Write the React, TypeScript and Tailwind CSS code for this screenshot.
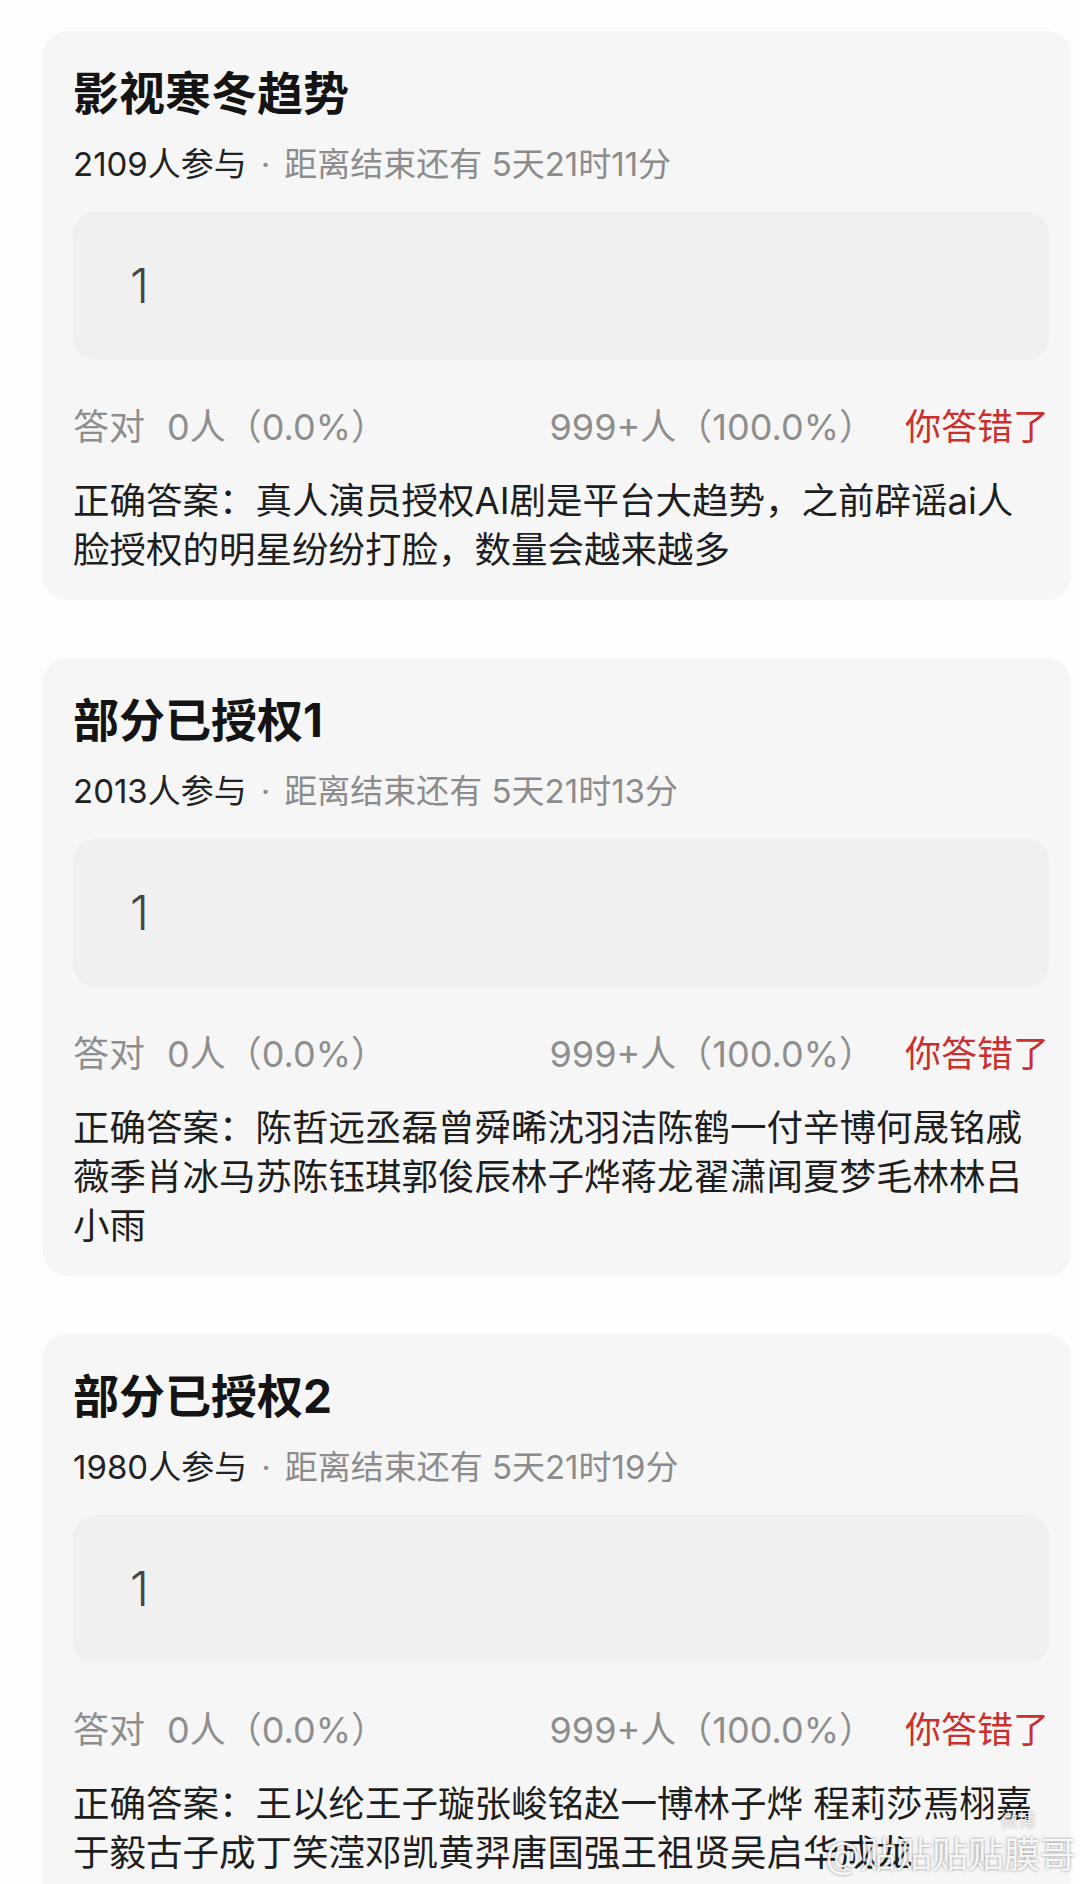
import React from "react";

type Quiz = {
  title: string;
  joined: number;
  remain: string;
  answer: string[];
};

const quizzes: Quiz[] = [
  {
    title: "影视寒冬趋势",
    joined: 2109,
    remain: "5天21时11分",
    answer: ["正确答案：真人演员授权AI剧是平台大趋势，之前辟谣ai人", "脸授权的明星纷纷打脸，数量会越来越多"],
  },
  {
    title: "部分已授权1",
    joined: 2013,
    remain: "5天21时13分",
    answer: [
      "正确答案：陈哲远丞磊曾舜晞沈羽洁陈鹤一付辛博何晟铭戚",
      "薇季肖冰马苏陈钰琪郭俊辰林子烨蒋龙翟潇闻夏梦毛林林吕",
      "小雨",
    ],
  },
  {
    title: "部分已授权2",
    joined: 1980,
    remain: "5天21时19分",
    answer: ["正确答案：王以纶王子璇张峻铭赵一博林子烨 程莉莎焉栩嘉", "于毅古子成丁笑滢邓凯黄羿唐国强王祖贤吴启华成龙"],
  },
];

const font = { fontFamily: 'Inter, "Noto Sans CJK SC", sans-serif' };

function QuizCard({ quiz }: { quiz: Quiz }) {
  return (
    <div className="rounded-[24px] bg-[#f6f6f6] pl-[30px] pr-[22px] pt-[34px] pb-[25px]">
      <h2 className="text-[46px] leading-[56px] font-bold text-[#141414]">{quiz.title}</h2>

      <p className="mt-[21px] text-[33px] leading-[44px] text-[#8c8c8c]">
        <span className="text-[#222]">{quiz.joined}人参与</span>
        <span className="mx-[14px]">·</span>
        距离结束还有 {quiz.remain}
      </p>

      {/* answer input */}
      <div className="mt-[26px] h-[148px] rounded-[22px] bg-[#f0f0f0] flex items-center pl-[57px]">
        <span className="text-[48px] font-light text-[#444]">1</span>
      </div>

      <div className="mt-[45px] flex items-center text-[36px] leading-[44px] text-[#8e8e8e]">
        <span className="flex-1">
          答对<span className="ml-[22px]">0人（0.0%）</span>
        </span>
        <span>999+人（100.0%）</span>
        <span className="ml-[30px] text-[#c9302e]">你答错了</span>
      </div>

      <div className="mt-[28px] text-[36.5px] leading-[49px] text-[#1e1e1e]">
        {quiz.answer.map((line) => (
          <p key={line} className="whitespace-nowrap">
            {line}
          </p>
        ))}
      </div>
    </div>
  );
}

export default function App() {
  return (
    <div className="relative h-[1884px] overflow-hidden bg-[#fdfdfd] pl-[43px] pr-[9px] pt-[31px]" style={font}>
      <div className="flex flex-col gap-[58px]">
        {quizzes.map((q) => (
          <QuizCard key={q.title} quiz={q} />
        ))}
      </div>

      {/* weibo watermark */}
      <div className="absolute right-[4px] bottom-[8px] flex flex-col items-end">
        <span className="mr-[40px] text-[18px] text-white/80 [text-shadow:0_0_2px_rgba(0,0,0,0.35)]">微博</span>
        <span className="text-[36px] leading-[42px] text-white/90 [text-shadow:0_0_3px_rgba(0,0,0,0.45)]">
          @贴贴贴贴膜哥
        </span>
      </div>
    </div>
  );
}
